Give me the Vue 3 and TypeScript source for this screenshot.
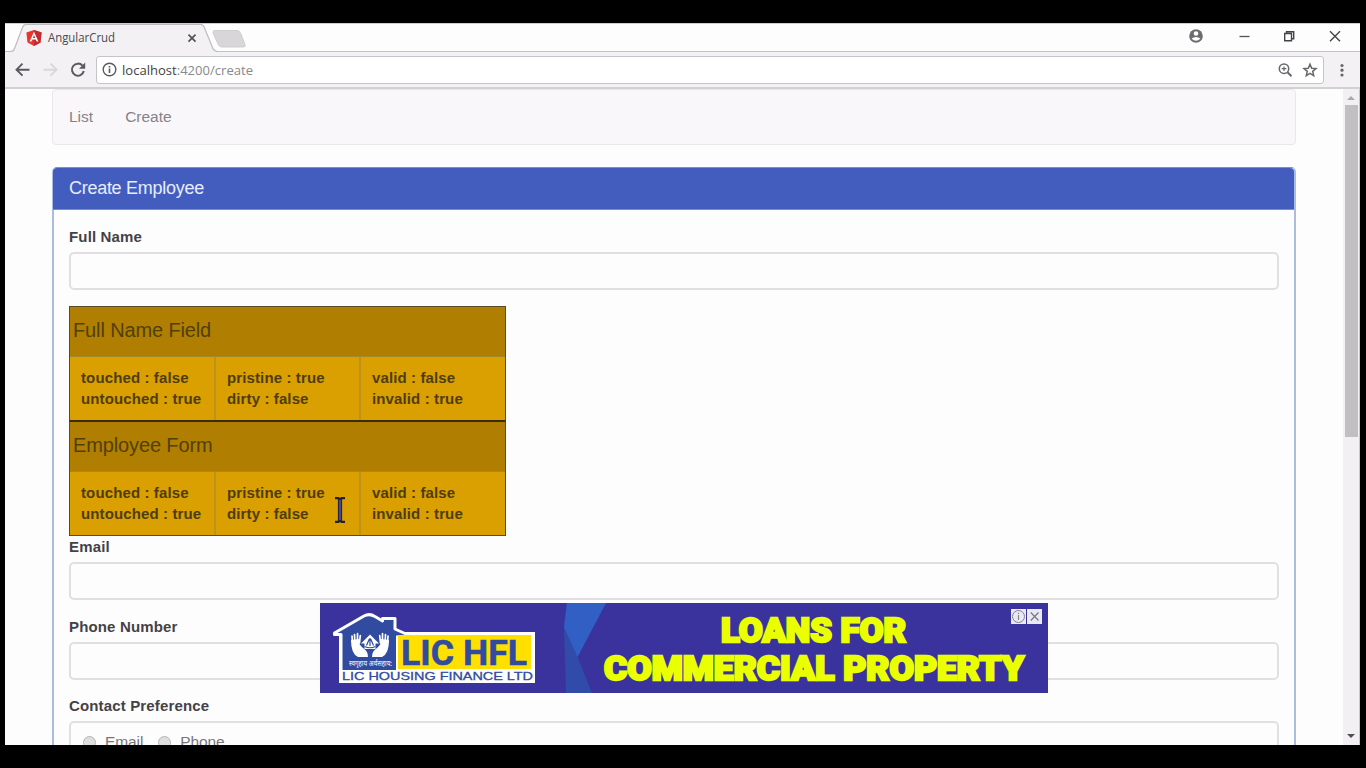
<script setup lang="ts">
interface Cell { lines: [string, string] }
interface StateTable { title: string; cells: Cell[] }

const cells: Cell[] = [
  { lines: ['touched : false', 'untouched : true'] },
  { lines: ['pristine : true', 'dirty : false'] },
  { lines: ['valid : false', 'invalid : true'] },
]
const tables: StateTable[] = [
  { title: 'Full Name Field', cells },
  { title: 'Employee Form', cells },
]
</script>

<template>
  <div class="screen">
    <div class="window">
      <header class="tabstrip">
        <svg class="tabs" width="260" height="29" viewBox="5 23 260 29">
          <path d="M5 51.500H10C14 51.500 14 49.500 15.500 46L22.500 27.500Q23.500 24.500 26 24.500H201Q203 24.500 204.300 27.500L212.500 47.500Q214 51.500 218 51.500V52H5Z" fill="#f3f1f4" />
          <path d="M5 51.500H10C14 51.500 14 49.500 15.500 46L22.500 27.500Q23.500 24.500 26 24.500H201Q203 24.500 204.300 27.500L212.500 47.500Q214 51.500 218 51.500" fill="none" stroke="#bdbbbe" stroke-width="1.200" />
          <path d="M215 30.500H237Q239.500 30.500 240.500 33L245 44.500Q246 47 243.500 47H222Q219.500 47 218.500 45L213 33Q212.500 30.500 215 30.500Z" fill="#d8d6d9" stroke="#cfcdd0" />
          <path d="M34 30L41.600 32.500L40.500 42.500L34 46L27.500 42.500L26.400 32.500Z" fill="#e8352e" />
          <path d="M34 30L41.600 32.500L40.500 42.500L34 46Z" fill="#c22c31" />
          <path d="M34 31.800L29.600 41.600H31.400L32.300 39.400H35.700L36.600 41.600H38.400ZM34 35.100L35.200 38H32.800Z" fill="#fff" fill-rule="evenodd" />
          <path d="M188.500 34.700L195.500 41.700M195.500 34.700L188.500 41.700" stroke="#555357" stroke-width="1.700" />
          <text x="48" y="42" textLength="67" lengthAdjust="spacingAndGlyphs" class="tabtext">AngularCrud</text>
        </svg>
        <svg class="controls" width="190" height="29" viewBox="1170 23 190 29">
          <circle cx="1196" cy="36" r="6.800" fill="#6d6b70" />
          <circle cx="1196" cy="33.500" r="2.300" fill="#fff" />
          <path d="M1191.500 38.500Q1196 35.500 1200.500 38.500Q1196 43 1191.500 38.500Z" fill="#fff" />
          <path d="M1239.500 36.500H1249.500" stroke="#555" stroke-width="1.300" />
          <path d="M1284.700 33.500H1291.500V40.700H1284.700ZM1286.500 33.500V31.700H1293.700V38.700H1291.500" fill="none" stroke="#444246" stroke-width="1.400" />
          <path d="M1330 31.300L1340 41.300M1340 31.300L1330 41.300" stroke="#444246" stroke-width="1.400" />
        </svg>
      </header>

      <div class="toolbar">
        <svg class="navicons" width="90" height="36" viewBox="5 52 90 36">
          <path d="M29.500 69.700H17M22.500 63.700L16.500 69.700L22.500 75.700" fill="none" stroke="#5b595d" stroke-width="1.900" />
          <path d="M43.500 69.700H56.500M50.500 63.700L56.500 69.700L50.500 75.700" fill="none" stroke="#d9d7db" stroke-width="1.900" />
          <path d="M82.500 65.700A6 6 0 1 0 83.800 71" fill="none" stroke="#5b595d" stroke-width="2" />
          <path d="M85.200 62.500V68.700H79Z" fill="#5b595d" />
        </svg>
        <div class="address">
          <svg width="15" height="15" viewBox="0 0 15 15">
            <circle cx="7.500" cy="7.500" r="6.300" fill="none" stroke="#5b595d" stroke-width="1.400" />
            <path d="M7.500 6.600V11M7.500 4V5.500" stroke="#5b595d" stroke-width="1.600" />
          </svg>
          <svg class="url" width="140" height="24" viewBox="0 0 140 24">
            <text x="0" y="16.500" textLength="131" lengthAdjust="spacingAndGlyphs"><tspan class="host">localhost</tspan>:4200/create</text>
          </svg>
          <svg class="actions" width="44" height="20" viewBox="1276 60 44 20">
            <circle cx="1284" cy="68.700" r="4.700" fill="none" stroke="#68666b" stroke-width="1.500" />
            <path d="M1287.500 72.200L1291.500 76.200" stroke="#68666b" stroke-width="2" />
            <path d="M1281.700 68.700H1286.300M1284 66.400V71" stroke="#68666b" stroke-width="1.200" />
            <path d="M1310 64.200L1311.700 68.200L1316 68.600L1312.700 71.400L1313.700 75.700L1310 73.400L1306.300 75.700L1307.300 71.400L1304 68.600L1308.300 68.200Z" fill="none" stroke="#68666b" stroke-width="1.500" />
          </svg>
        </div>
        <svg class="dots" width="36" height="36" viewBox="1324 52 36 36">
          <g fill="#68666b"><circle cx="1342" cy="65.500" r="1.600" /><circle cx="1342" cy="70.200" r="1.600" /><circle cx="1342" cy="75" r="1.600" /></g>
        </svg>
      </div>

      <div class="viewport">
        <main class="page">
          <nav class="navbar"><a>List</a><a>Create</a></nav>
          <section class="panel">
            <h3 class="heading">Create Employee</h3>
            <div class="body">
              <label>Full Name</label>
              <div class="input first"></div>
              <div v-for="t in tables" :key="t.title" class="state">
                <div class="title">{{ t.title }}</div>
                <div class="cols">
                  <div v-for="c in t.cells" :key="c.lines[0]" class="col">
                    <span>{{ c.lines[0] }}</span><span>{{ c.lines[1] }}</span>
                  </div>
                </div>
              </div>
              <label class="email">Email</label>
              <div class="input"></div>
              <label class="phone">Phone Number</label>
              <div class="input"></div>
              <label class="contact">Contact Preference</label>
              <div class="input choices">
                <i class="radio"></i><span>Email</span>
                <i class="radio second"></i><span>Phone</span>
              </div>
            </div>
          </section>
        </main>
        <aside class="scroll">
          <i class="up"></i>
          <div class="thumb"></div>
          <i class="down"></i>
        </aside>
      </div>
    </div>

    <svg class="cursor" width="12" height="28" viewBox="0 0 12 28">
      <path d="M1 2.200H4.500L6 3.500L7.500 2.200H11M1 25.800H4.500L6 24.500L7.500 25.800H11" fill="none" stroke="#241f2c" stroke-width="2.200" />
      <path d="M6 3V25" stroke="#29243a" stroke-width="4.200" />
      <path d="M6 4V24" stroke="#4a4d9c" stroke-width="1.800" />
    </svg>

    <svg class="ad" width="728" height="90" viewBox="320 603 728 90">
      <rect x="320" y="603" width="728" height="90" fill="#3a339d" />
      <path d="M567 603H606L577.500 657L592 693H566L564 627Z" fill="#304ba9" />
      <path d="M567 603H606L577.500 657L564 627Z" fill="#315fc3" />
      <rect x="339" y="632" width="196" height="51" fill="#fff" />
      <path d="M341 670V634.500H334.500V633L364 616Q369.500 613 375 616.500L382.500 621V618.500H395V629L407 635.500H396V670Z" fill="#304b9f" />
      <path d="M341 670V634.500H334.500V633L364 616Q369.500 613 375 616.500L382.500 621V618.500H395V629L407 634.500" fill="none" stroke="#fff" stroke-width="3" stroke-linejoin="round" stroke-linecap="round" />
      <rect x="398" y="635" width="133" height="34" fill="#ffe000" />
      <path d="M370 634.500L379 643.500H375.500V649H364.500V643.500H361Z" fill="#fff" />
      <path d="M370 638V646M364.500 646.500Q370 649 375.500 646.500M369.300 639L366.500 645.500M370.700 639L373.500 645.500" fill="none" stroke="#304b9f" stroke-width="1.200" />
      <g fill="none" stroke="#fff" stroke-linecap="round" stroke-width="1.700">
        <path d="M355 645L354.500 634.500M357.500 646L357.500 633.500M359.500 643L360.300 635.500M352.500 643L352 636M385 645L385.500 634.500M382.500 646L382.500 633.500M380.500 643L379.700 635.500M387.500 643L388 636" />
      </g>
      <path d="M351 640Q351 654 358 657H368Q368 651 363 648Q358 644 359 639ZM389 640Q389 654 382 657H372Q372 651 377 648Q382 644 381 639Z" fill="#fff" />
      <text x="349" y="666" textLength="43" lengthAdjust="spacingAndGlyphs" class="motto">स्वगृहाय अर्थसहाय:</text>
      <text x="401" y="665" textLength="53" lengthAdjust="spacingAndGlyphs" class="brand">LIC</text>
      <text x="463" y="665" textLength="64" lengthAdjust="spacingAndGlyphs" class="brand">HFL</text>
      <text x="342" y="680" textLength="191" lengthAdjust="spacingAndGlyphs" class="company">LIC HOUSING FINANCE LTD</text>
      <text x="721" y="642" textLength="185" lengthAdjust="spacingAndGlyphs" class="slogan">LOANS FOR</text>
      <text x="604" y="679.500" textLength="420" lengthAdjust="spacingAndGlyphs" class="slogan">COMMERCIAL PROPERTY</text>
      <path d="M1011 609H1026V624H1011ZM1027 609H1042V624H1027Z" fill="#e9e8f5" />
      <circle cx="1018.500" cy="616.500" r="6" fill="none" stroke="#85838c" />
      <path d="M1018.500 615V620M1018.500 612.800V614" stroke="#85838c" stroke-width="1.200" />
      <path d="M1030.800 612.500L1038.500 620.500M1038.500 612.500L1030.800 620.500" stroke="#77757e" stroke-width="1.200" />
    </svg>
  </div>
</template>

<style>
body { margin: 0; overflow: hidden; background: #000; }
</style>

<style scoped>
* { box-sizing: border-box; }
.screen { position: relative; width: 1366px; height: 768px; background: #000; padding: 23px 6px 23px 5px; overflow: hidden; font-family: "Liberation Sans", Arial, sans-serif; }
.window { height: 722px; background: #fefdfe; display: flex; flex-direction: column; overflow: hidden; border-top: 1px solid #cfcdd0; }
.tabstrip { height: 28px; flex: none; display: flex; justify-content: space-between; border-bottom: 1px solid #c4c2c5; }
.tabs, .controls { margin-top: -1px; flex: none; }
.tabtext { font: 12.500px "Open Sans", "Noto Sans", sans-serif; fill: #4a484c; }
.toolbar { height: 37px; flex: none; display: flex; align-items: center; background: #f3f1f4; border-bottom: 2px solid #d2d0d3; }
.navicons, .dots { flex: none; }
.address { display: flex; align-items: center; flex: 1; height: 28px; margin-left: 1px; padding-left: 5px; background: #fff; border: 1.500px solid #c6c4c8; border-radius: 3px; }
.url { margin-left: 5px; font: 13px "Open Sans", "Noto Sans", sans-serif; fill: #8a888c; }
.host { fill: #444246; }
.actions { margin-left: auto; margin-right: 3px; }
.viewport { flex: 1; min-height: 0; display: flex; justify-content: space-between; overflow: hidden; }
.page { width: 1244px; margin-left: 47px; }
.navbar { height: 56px; display: flex; align-items: center; gap: 32px; padding-left: 16px; background: #f9f7fa; border: 1px solid #e9e7ea; border-radius: 4px; font-size: 15.500px; color: #858388; }
.panel { margin-top: 22px; height: 700px; border: 2px solid #a9bce3; border-top: 1px solid #6f93d8; border-radius: 5px 5px 0 0; }
.heading { margin: 0 0 0 -1px; height: 42px; line-height: 40px; background: #435dbf; border-bottom: 1px solid #6d91d5; border-radius: 4px 4px 0 0; padding-left: 16px; font-size: 18px; font-weight: 400; letter-spacing: -.28px; color: #e5edff; }
.body { padding: 17px 15px 0 15px; display: flex; flex-direction: column; align-items: stretch; }
label { height: 21px; line-height: 19px; margin-bottom: 4px; font-size: 15px; font-weight: 700; letter-spacing: .15px; color: #444246; }
.input { height: 38px; flex: none; border: 2px solid #e1dfe2; border-radius: 5px; background: #fefdfe; }
.first { margin-bottom: 16px; }
.email { margin-top: 1px; }
.phone { margin-top: 17px; }
.contact { margin-top: 16px; }
.choices { height: 70px; display: flex; align-items: flex-start; padding: 9px 12px; font-size: 15.500px; line-height: 20px; letter-spacing: -.1px; color: #77757a; }
.radio { width: 13px; height: 13px; margin: 4px 9px 0 0; border-radius: 50%; border: 1px solid #b5b3b7; background: #dfdde0; }
.radio.second { margin-left: 15px; }
.state { width: 437px; height: 115px; flex: none; border: 1px solid #554b27; background: #da9f00; color: #51410d; }
.state + .state { border-top: 1px solid #392d08; }
.state:has(+ .state) { border-bottom-color: #392d08; }
.title { height: 49px; line-height: 46px; padding-left: 3px; background: #b07e00; font-size: 20px; letter-spacing: -.13px; color: #514009; }
.cols { height: 64px; display: grid; grid-template-columns: 146px 145px 144px; border-top: 1px solid #a28b27; }
.col { display: flex; flex-direction: column; padding: 10px 0 0 11px; font-size: 15px; font-weight: 700; line-height: 21px; letter-spacing: .12px; white-space: nowrap; color: #4e3d0b; border-right: 2px solid #bd931b; }
.col:last-child { border-right: 0; }
.scroll { width: 17px; display: flex; flex-direction: column; align-items: center; background: #f2f0f3; border-right: 1px solid #c9c7ca; }
.up, .down { border: 4px solid transparent; }
.up { border-bottom-color: #aaa8ac; border-top-width: 0; margin: 7px 0 5px; }
.thumb { width: 13px; height: 332px; background: #c1bfc2; }
.down { border-top-color: #504e52; border-bottom-width: 0; margin-top: auto; margin-bottom: 7px; }
.cursor { position: absolute; left: 334px; top: 496px; }
.ad { position: absolute; left: 320px; top: 603px; }
.motto { font: 400 7.500px "Noto Sans", sans-serif; fill: #fff; }
.brand { font: 700 35px Roboto, "Liberation Sans", sans-serif; fill: #304b9f; stroke: #304b9f; stroke-width: .500px; }
.company { font: 400 11px "Liberation Sans", sans-serif; fill: #304b9f; stroke: #304b9f; stroke-width: .300px; }
.slogan { font: 900 34px Roboto, sans-serif; fill: #eaff00; stroke: #eaff00; stroke-width: 2.400px; }
</style>
